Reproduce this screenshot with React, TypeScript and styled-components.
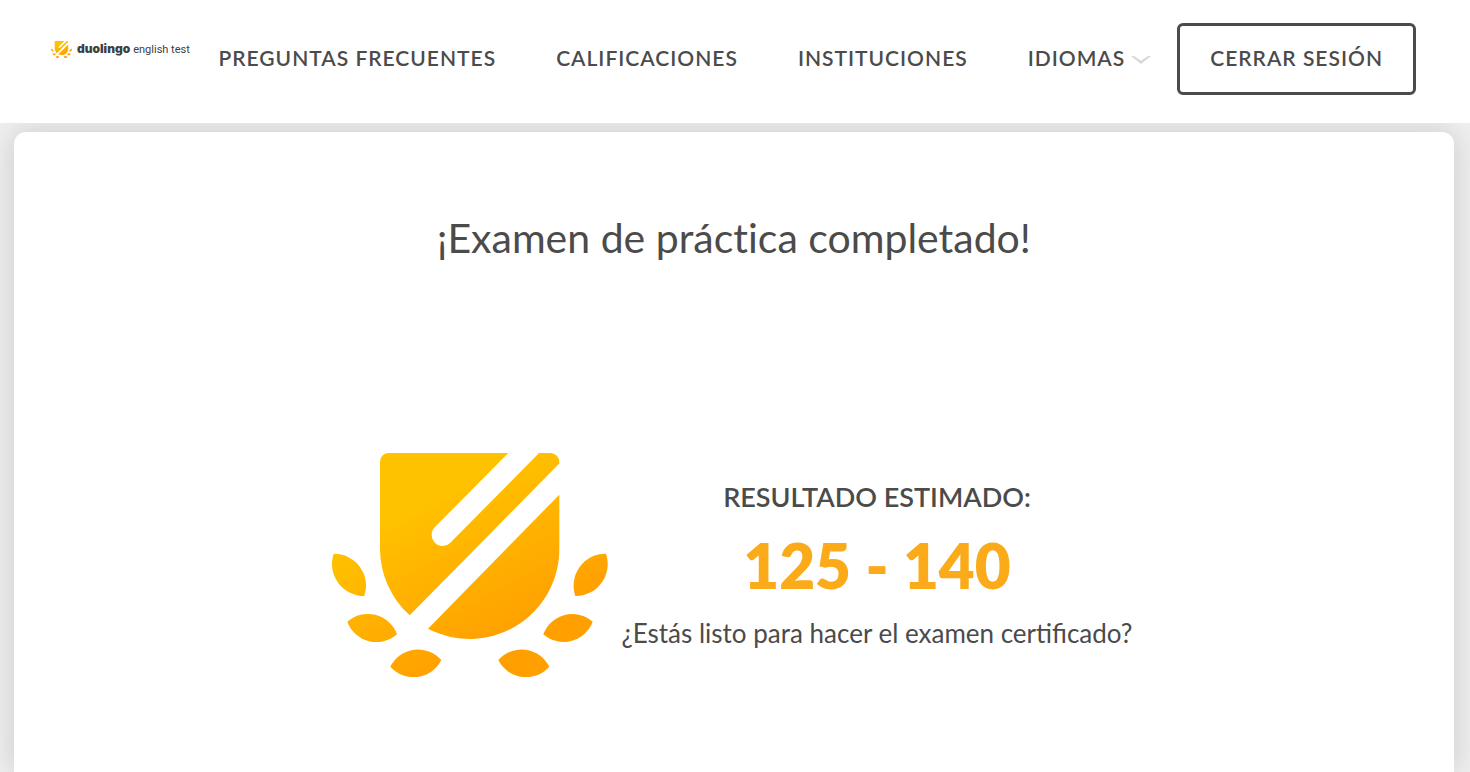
import React from "react";
import styled, { createGlobalStyle } from "styled-components";

const GlobalStyle = createGlobalStyle`
  *, *::before, *::after { box-sizing: border-box; }
  body {
    margin: 0;
    background: #efefef;
    color: #4b4b4b;
    font-family: Lato, "Open Sans", sans-serif;
  }
`;

const Page = styled.div`
  display: flex;
  flex-direction: column;
  min-height: 100vh;
`;

const Header = styled.header`
  display: flex;
  align-items: flex-start;
  justify-content: space-between;
  padding: 23px 54px 28px 51px;
  background: #ffffff;
`;

const Brand = styled.a`
  display: flex;
  align-items: center;
  gap: 5px;
  height: 52px;
  color: #3c4043;
  text-decoration: none;
  white-space: nowrap;
`;

const BrandText = styled.span`
  display: flex;
  align-items: baseline;
  gap: 3px;
  font-family: Roboto, sans-serif;
  font-size: 11px;
  line-height: 16px;
`;

const BrandName = styled.strong`
  font-family: Inter, sans-serif;
  font-size: 12px;
  font-weight: 900;
`;

const Nav = styled.nav`
  display: flex;
  align-items: center;
`;

const NavLinks = styled.div`
  display: flex;
  align-items: center;
  gap: 60px;
  padding: 0 26px 2px 0;
`;

const navText = `
  font-family: inherit;
  font-size: 21px;
  font-weight: 600;
  line-height: 26px;
  letter-spacing: 1px;
  color: #4b4b4b;
  white-space: nowrap;
`;

const NavLink = styled.a`
  ${navText}
  text-decoration: none;
`;

const LanguageButton = styled.button`
  ${navText}
  display: flex;
  align-items: center;
  gap: 6px;
  padding: 0;
  border: 0;
  background: none;
  cursor: pointer;
`;

const LogoutButton = styled.button`
  ${navText}
  height: 72px;
  padding: 0 30px 2px;
  border: 3px solid #4b4b4b;
  border-radius: 6px;
  background: #ffffff;
  cursor: pointer;
`;

const Main = styled.main`
  display: flex;
  flex: 1;
  padding: 9px 16px 0 14px;
  overflow: hidden;
`;

const Card = styled.section`
  flex: 1;
  display: flex;
  flex-direction: column;
  align-items: center;
  gap: 190px;
  padding: 81px 24px 64px;
  border-radius: 12px 12px 0 0;
  background: #ffffff;
  box-shadow: 0 0 30px rgba(0, 0, 0, 0.16);
`;

const Title = styled.h1`
  margin: 0;
  font-size: 41px;
  font-weight: 400;
  line-height: 50px;
  font-variant-ligatures: none;
  text-align: center;
`;

const Result = styled.div`
  display: flex;
  align-items: center;
  gap: 10px;
`;

const ResultText = styled.div`
  padding: 0 4px;
  text-align: center;
`;

const ResultLabel = styled.h2`
  margin: 0;
  font-size: 27px;
  font-weight: 600;
  line-height: 46px;
`;

const Score = styled.p`
  margin: 0;
  font-size: 62px;
  font-weight: 800;
  line-height: 90px;
  color: #fbaa19;
`;

const Question = styled.p`
  margin: 0;
  font-size: 26px;
  line-height: 46px;
`;

function Crest({ id, width, height }: { id: string; width: number; height: number }) {
  return (
    <svg width={width} height={height} viewBox="0 0 276 224" aria-hidden="true">
      <defs>
        <linearGradient id={id} gradientUnits="userSpaceOnUse" x1="90" y1="50" x2="165" y2="190">
          <stop offset="0" stopColor="#ffc200" />
          <stop offset="1" stopColor="#ffa000" />
        </linearGradient>
      </defs>
      <g fill={`url(#${id})`}>
        <path d="M56.5 0H176.3L102.9 74.1A10.85 10.85 0 0 0 118.6 89.6L207 0H218.5A9 9 0 0 1 227.3 9V10.5L77.7 162.3A89.7 89.7 0 0 1 48 96.5V8.5A8.5 8.5 0 0 1 56.5 0Z" />
        <path d="M227.3 41.7V96.5A89.7 89.7 0 0 1 96 175.7Z" />
        <path d="M1.7 100.7A32 32 0 0 1 32.3 143A32 32 0 0 1 1.7 100.7Z" />
        <path d="M15.3 168.7A31 31 0 0 1 65 181.3A31 31 0 0 1 15.3 168.7Z" />
        <path d="M58.3 213.7A31 31 0 0 1 109.3 207A31 31 0 0 1 58.3 213.7Z" />
        <path d="M274 100.7A32 32 0 0 0 243.3 143A32 32 0 0 0 274 100.7Z" />
        <path d="M260.7 168.7A31 31 0 0 0 211.3 181.3A31 31 0 0 0 260.7 168.7Z" />
        <path d="M217.3 213.7A31 31 0 0 0 166.3 207A31 31 0 0 0 217.3 213.7Z" />
      </g>
    </svg>
  );
}

function Chevron() {
  return (
    <svg width="20" height="14" viewBox="0 0 20 14" aria-hidden="true">
      <path d="M0 5H3L10 9.8L17 5H20L10 13Z" fill="#d8d8d8" />
    </svg>
  );
}

export default function App() {
  return (
    <Page>
      <GlobalStyle />
      <Header>
        <Brand href="#">
          <Crest id="crest-small" width={21} height={17} />
          <BrandText>
            <BrandName>duolingo</BrandName>
            <span>english test</span>
          </BrandText>
        </Brand>
        <Nav>
          <NavLinks>
            <NavLink href="#faq">PREGUNTAS FRECUENTES</NavLink>
            <NavLink href="#scores">CALIFICACIONES</NavLink>
            <NavLink href="#institutions">INSTITUCIONES</NavLink>
            <LanguageButton type="button">
              IDIOMAS
              <Chevron />
            </LanguageButton>
          </NavLinks>
          <LogoutButton type="button">CERRAR SESIÓN</LogoutButton>
        </Nav>
      </Header>
      <Main>
        <Card>
          <Title>¡Examen de práctica completado!</Title>
          <Result>
            <Crest id="crest-large" width={276} height={224} />
            <ResultText>
              <ResultLabel>RESULTADO ESTIMADO:</ResultLabel>
              <Score>125 - 140</Score>
              <Question>¿Estás listo para hacer el examen certificado?</Question>
            </ResultText>
          </Result>
        </Card>
      </Main>
    </Page>
  );
}
